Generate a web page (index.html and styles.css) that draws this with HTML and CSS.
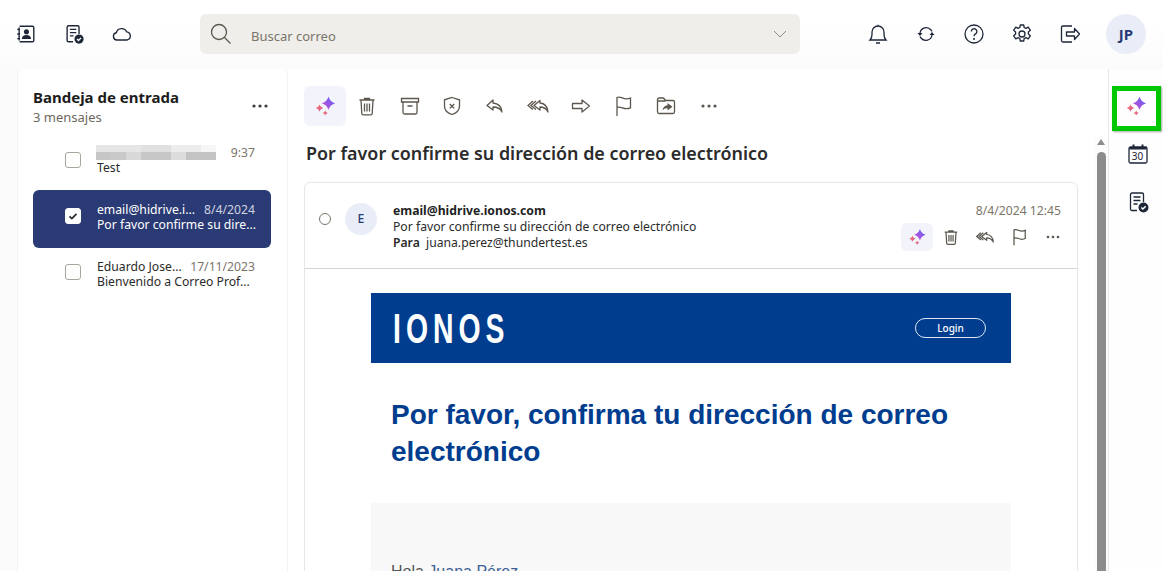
FILE: index.html
```html
<!DOCTYPE html>
<html lang="es">
<head>
<meta charset="utf-8">
<title>Correo</title>
<link rel="stylesheet" href="styles.css">
</head>
<body>
<svg class="defs" width="0" height="0" aria-hidden="true">
  <defs>
    <linearGradient id="spark-big" x1="0" y1="1" x2="1" y2="0"><stop offset="0" stop-color="#d04fd0"/><stop offset="1" stop-color="#5560f8"/></linearGradient>
    <linearGradient id="spark-small" x1="0" y1="0" x2="1" y2="1"><stop offset="0" stop-color="#f08a66"/><stop offset="1" stop-color="#d9479c"/></linearGradient>
    <symbol id="i-spark" viewBox="0 0 24 24">
      <path stroke="none" fill="url(#spark-big)" d="M15.500 2.500C16.600 6 18.300 7.900 22.300 9.300 18.300 10.700 16.600 12.600 15.500 16.100 14.400 12.600 12.700 10.700 8.700 9.300 12.700 7.900 14.400 6 15.500 2.500z"/>
      <path stroke="none" fill="url(#spark-small)" d="M6.500 10.300C7.100 12.300 8 13.200 10.300 14 8 14.800 7.100 15.700 6.500 17.700 5.900 15.700 5 14.800 2.700 14 5 13.200 5.900 12.300 6.500 10.300z"/>
      <path stroke="none" fill="url(#spark-small)" d="M12.200 16.300C12.600 17.800 13.200 18.400 14.900 19 13.200 19.600 12.600 20.200 12.200 21.700 11.800 20.200 11.200 19.600 9.500 19 11.200 18.400 11.800 17.800 12.200 16.300z"/>
    </symbol>
    <symbol id="i-trash" viewBox="0 0 24 24"><path d="M4.500 6h15M9.500 6V4.500h5V6M6 6l.8 13.500a1.500 1.500 0 0 0 1.500 1.400h7.400a1.500 1.500 0 0 0 1.500-1.400L18 6M9.500 9.500v8M12 9.500v8M14.500 9.500v8"/></symbol>
    <symbol id="i-archive" viewBox="0 0 24 24"><path d="M3.500 4.500h17v3.500h-17zM5 8v10.500a1.500 1.500 0 0 0 1.500 1.500h11a1.500 1.500 0 0 0 1.500-1.500V8M9.500 12h5"/></symbol>
    <symbol id="i-shield" viewBox="0 0 24 24"><path d="M12 3.500l7.500 2.300v6.200c0 4.200-3 7-7.500 8.500-4.500-1.500-7.500-4.300-7.500-8.500V5.800zM9.800 10l4.400 4.400M14.200 10l-4.400 4.400"/></symbol>
    <symbol id="i-reply" viewBox="0 0 24 24"><path d="M10 6L4 11.500l6 4.500v-3c4 0 7 1 9 5-.5-5.500-3.500-8.500-9-9z" stroke-linejoin="round"/></symbol>
    <symbol id="i-replyall" viewBox="0 0 24 24"><path d="M14 6.500L8 11.500l6 4.500v-3c4 0 6 1 8 5-.5-5.500-2.500-8.500-8-9z" stroke-linejoin="round"/><path d="M7 7l-5 4.500 5 4M10 7l-5 4.500 5 4"/></symbol>
    <symbol id="i-forward" viewBox="0 0 24 24"><path d="M3.500 9.500h9.500V6l7.500 6-7.500 6v-3.500H3.500z" stroke-linejoin="round"/></symbol>
    <symbol id="i-flag" viewBox="0 0 24 24"><path d="M6 22V3.500c4-1.500 5.500 1.600 9.500 1.400 1.500 0 3-.4 4-.9v9.800c-1 .5-2.500.9-4 .9-4 .2-5.500-2.700-9.500-1.200"/></symbol>
    <symbol id="i-move" viewBox="0 0 24 24"><path d="M3.500 18V5.500A1.500 1.500 0 0 1 5 4h4.500l2 2.500H19A1.500 1.500 0 0 1 20.500 8v10a1.500 1.500 0 0 1-1.500 1.500H5A1.500 1.500 0 0 1 3.500 18zM3.500 7h8"/><path class="solid" d="M13.500 9l5 3.800-5 3.700v-2.200c-2.300 0-3.800.6-5 2.200.3-3 2-5 5-5.300z"/></symbol>
    <symbol id="i-dots" viewBox="0 0 24 24"><circle class="solid" cx="6" cy="12" r="1.600"/><circle class="solid" cx="12" cy="12" r="1.600"/><circle class="solid" cx="18" cy="12" r="1.600"/></symbol>
    <symbol id="i-contacts" viewBox="0 0 24 24"><path d="M5 3.500h14a1.500 1.500 0 0 1 1.500 1.500v14a1.500 1.500 0 0 1-1.500 1.500H5"/><path d="M4.500 5v14M2.500 7h3M2.500 12h3M2.500 17h3"/><circle class="solid" cx="12.500" cy="9.500" r="2.800"/><path class="solid" d="M7.500 17.500c0-3 2-4.500 5-4.500s5 1.500 5 4.500z"/></symbol>
    <symbol id="i-tasks" viewBox="0 0 24 24"><path d="M11 20.500H6A1.500 1.500 0 0 1 4.500 19V4.500A1.500 1.500 0 0 1 6 3h10a1.500 1.500 0 0 1 1.500 1.500V12M7.500 7h7M7.500 10.500h7M7.500 14h4"/><circle class="solid" cx="17.500" cy="17.500" r="5"/><path class="tick" d="M15.300 17.500l1.600 1.600 2.800-2.900"/></symbol>
    <symbol id="i-cloud" viewBox="0 0 24 24"><path d="M6.500 18.500a4 4 0 0 1-.7-7.900 6 6 0 0 1 11.300-.9 4.500 4.500 0 0 1 .7 8.800z"/></symbol>
    <symbol id="i-search" viewBox="0 0 24 24"><circle cx="10" cy="10" r="7.500"/><path d="M15.500 15.500l6 6"/></symbol>
    <symbol id="i-chevron" viewBox="0 0 24 24"><path d="M6 9l6 6 6-6"/></symbol>
    <symbol id="i-bell" viewBox="0 0 24 24"><path d="M4 18c1.500-1.500 2-3 2-5.500V10a6 6 0 0 1 12 0v2.500c0 2.500.5 4 2 5.500zM10 21h4M12 4V2.800"/></symbol>
    <symbol id="i-sync" viewBox="0 0 24 24"><path d="M6 11a6.200 6.200 0 0 1 11-3l1 1.500M18 13a6.200 6.200 0 0 1-11 3l-1-1.500"/><path class="solid" d="M3.500 11h5L6 14zM20.500 13h-5L18 10z"/></symbol>
    <symbol id="i-help" viewBox="0 0 24 24"><circle cx="12" cy="12" r="9"/><path d="M9.300 9.500a2.800 2.800 0 1 1 4.300 2.400c-1 .6-1.600 1.100-1.600 2.300"/><circle class="solid" cx="12" cy="17" r="1"/></symbol>
    <symbol id="i-gear" viewBox="0 0 24 24"><circle cx="12" cy="12" r="3"/><path d="M10.300 3h3.400l.5 2.500 1.700.8 2.300-1.100 2.100 3-1.900 1.700v2.200l1.900 1.700-2.100 3-2.300-1.100-1.700.8-.5 2.500h-3.400l-.5-2.500-1.700-.8-2.300 1.100-2.100-3 1.900-1.700v-2.200L3.700 8.200l2.100-3 2.300 1.100 1.700-.8z" stroke-linejoin="round"/></symbol>
    <symbol id="i-logout" viewBox="0 0 24 24"><path d="M14 4H5a1.500 1.500 0 0 0-1.500 1.500v13A1.500 1.500 0 0 0 5 20h9"/><path d="M8.500 10h8V6.500l5 5.500-5 5.500V14h-8z" stroke-linejoin="round"/></symbol>
    <symbol id="i-calendar" viewBox="0 0 24 24"><path d="M4.500 5h15A1.500 1.500 0 0 1 21 6.500v13a1.500 1.500 0 0 1-1.500 1.500h-15A1.500 1.500 0 0 1 3 19.500v-13A1.500 1.500 0 0 1 4.500 5z"/><path class="solid" d="M3.500 5h17v2.500h-17zM6.500 2.500h2V5h-2zM15.500 2.500h2V5h-2z"/></symbol>
  </defs>
</svg>

<header class="topbar">
  <nav class="top-group top-left">
    <svg class="icon dark"><use href="#i-contacts"/></svg>
    <svg class="icon dark"><use href="#i-tasks"/></svg>
    <svg class="icon dark"><use href="#i-cloud"/></svg>
  </nav>
  <div class="search">
    <svg class="icon search-icon"><use href="#i-search"/></svg>
    <span class="search-text">Buscar correo</span>
    <svg class="chevron"><use href="#i-chevron"/></svg>
  </div>
  <nav class="top-group top-right">
    <svg class="icon dark"><use href="#i-bell"/></svg>
    <svg class="icon dark"><use href="#i-sync"/></svg>
    <svg class="icon dark"><use href="#i-help"/></svg>
    <svg class="icon dark"><use href="#i-gear"/></svg>
    <svg class="icon dark"><use href="#i-logout"/></svg>
  </nav>
  <div class="avatar-top">JP</div>
</header>

<div class="workspace">
  <aside class="folder">
    <div class="folder-head">
      <div>
        <h2 class="folder-title">Bandeja de entrada</h2>
        <p class="folder-count">3 mensajes</p>
      </div>
      <svg class="icon dots-head"><use href="#i-dots"/></svg>
    </div>
    <ul class="messages">
      <li class="message first">
        <span class="check"></span>
        <div class="message-body">
          <div class="line"><span class="pixelated"></span><span class="when">9:37</span></div>
          <div class="line"><span class="subject">Test</span></div>
        </div>
      </li>
      <li class="message selected">
        <span class="check on"><svg viewBox="0 0 16 16"><path d="M4 8.500l2.700 2.500L12 5.500"/></svg></span>
        <div class="message-body">
          <div class="line"><span class="sender">email@hidrive.i...</span><span class="when">8/4/2024</span></div>
          <div class="line"><span class="subject">Por favor confirme su dire...</span></div>
        </div>
      </li>
      <li class="message last">
        <span class="check"></span>
        <div class="message-body">
          <div class="line"><span class="sender">Eduardo Jose...</span><span class="when">17/11/2023</span></div>
          <div class="line"><span class="subject">Bienvenido a Correo Prof...</span></div>
        </div>
      </li>
    </ul>
  </aside>

  <main class="reader">
    <div class="reader-col">
      <div class="toolbar">
        <span class="spark-btn"><svg class="icon"><use href="#i-spark"/></svg></span>
        <svg class="icon tool"><use href="#i-trash"/></svg>
        <svg class="icon tool"><use href="#i-archive"/></svg>
        <svg class="icon tool"><use href="#i-shield"/></svg>
        <svg class="icon tool"><use href="#i-reply"/></svg>
        <svg class="icon tool"><use href="#i-replyall"/></svg>
        <svg class="icon tool"><use href="#i-forward"/></svg>
        <svg class="icon tool"><use href="#i-flag"/></svg>
        <svg class="icon tool"><use href="#i-move"/></svg>
        <svg class="icon tool"><use href="#i-dots"/></svg>
      </div>
      <h1 class="mail-title">Por favor confirme su dirección de correo electrónico</h1>
      <article class="card">
        <div class="card-head">
          <span class="radio"></span>
          <span class="avatar">E</span>
          <div class="card-meta">
            <div class="from">email@hidrive.ionos.com</div>
            <div>Por favor confirme su dirección de correo electrónico</div>
            <div><b class="to-label">Para</b> juana.perez@thundertest.es</div>
          </div>
          <div class="card-side">
            <div class="card-date">8/4/2024 12:45</div>
            <div class="card-actions">
              <span class="spark-mini"><svg class="icon"><use href="#i-spark"/></svg></span>
              <svg class="icon mini"><use href="#i-trash"/></svg>
              <svg class="icon mini"><use href="#i-replyall"/></svg>
              <svg class="icon mini"><use href="#i-flag"/></svg>
              <svg class="icon mini"><use href="#i-dots"/></svg>
            </div>
          </div>
        </div>
        <div class="mail">
          <div class="mail-banner">
            <span class="brand">IONOS</span>
            <span class="login">Login</span>
          </div>
          <h2 class="mail-heading">Por favor, confirma tu dirección de correo electrónico</h2>
          <div class="mail-box">
            <p class="greeting">Hola <span class="name">Juana Pérez</span></p>
          </div>
        </div>
      </article>
    </div>
    <div class="scrollbar">
      <span class="scroll-up"></span>
      <span class="scroll-thumb"></span>
    </div>
  </main>

  <aside class="rail">
    <span class="rail-active"><svg class="icon"><use href="#i-spark"/></svg></span>
    <span class="rail-item">
      <svg class="icon dark"><use href="#i-calendar"/></svg>
      <span class="cal-num">30</span>
    </span>
    <span class="rail-item"><svg class="icon dark"><use href="#i-tasks"/></svg></span>
  </aside>
</div>
</body>
</html>
```
FILE: styles.css
```css
* { box-sizing: border-box; }
html, body { margin: 0; height: 571px; overflow: hidden; }
body {
  font-family: "Noto Sans", "Open Sans", sans-serif;
  font-size: 12.2px;
  color: #2b2b2b;
  background: #fbfbfb;
  display: flex;
  flex-direction: column;
}
.defs { position: absolute; }
h1, h2, p, ul { margin: 0; padding: 0; }
ul { list-style: none; }

.icon { width: 24px; height: 24px; flex: none; fill: none; stroke: #5c574e; stroke-width: 1.3; }
.icon.dark { stroke: #1e2738; color: #1e2738; }
.solid { fill: currentColor; stroke: none; }
.icon.tool, .icon.mini { color: #5c574e; }
.tick { stroke: #fff; stroke-width: 1.4; fill: none; }

.topbar {
  height: 69px;
  flex: none;
  display: flex;
  align-items: center;
  padding: 0 17px 1px 15px;
  background: linear-gradient(#ffffff 30%, #fbfbfb);
}
.top-group { display: flex; gap: 24px; color: #1e2738; }
.top-left { gap: 26px; }
.top-left .icon { width: 22px; height: 22px; stroke-width: 1.5; }
.search {
  width: 600px;
  height: 40px;
  margin-left: 67px;
  padding: 0 8px 0 9px;
  display: flex;
  align-items: center;
  background: #efeeea;
  border-radius: 6px;
}
.search-icon { stroke: #5c574e; }
.search-text { margin-left: 18px; margin-top: 4px; flex: 1; font-size: 13px; color: #7b756a; }
.chevron { width: 24px; height: 24px; fill: none; stroke: #8e897f; stroke-width: 1; }
.top-right { margin-left: 66px; }
.avatar-top {
  width: 40px;
  height: 40px;
  margin-left: 24px;
  border-radius: 50%;
  background: #e9edf7;
  color: #2a3a74;
  font-weight: 700;
  font-size: 15px;
  display: flex;
  align-items: center;
  justify-content: center;
}

.workspace { flex: 1; display: flex; min-height: 0; padding-left: 17px; }

.folder {
  width: 271px;
  flex: none;
  background: #fff;
  border: 1px solid #f3f3f3;
  border-width: 0 1px;
  border-radius: 6px 6px 0 0;
  padding: 0 15px;
}
.folder-head { display: flex; justify-content: space-between; padding-top: 18px; height: 65px; }
.folder-title { font-size: 15px; line-height: 21px; font-weight: 700; color: #1c1c1c; }
.folder-count { font-size: 13px; line-height: 18px; margin-top: 0; color: #6e685e; }
.dots-head { margin: 7px 0 0 0; color: #3b3b3b; }

.messages { display: flex; flex-direction: column; }
.message {
  display: flex;
  align-items: flex-start;
  height: 56px;
  padding: 13px 16px 0 32px;
  border-radius: 6px;
  line-height: 15px;
  width: 238px;
}
.message.first { padding-top: 11px; }
.message.selected { height: 58px; margin-bottom: -2px; padding-top: 12px; background: #2a3a74; color: #fff; }
.check {
  width: 16px;
  height: 16px;
  margin-top: 7px;
  flex: none;
  border: 1px solid #a9a59c;
  border-radius: 3px;
  background: #fff;
  margin-right: 16px;
  display: flex;
}
.first .check { margin-top: 7px; }
.selected .check { margin-top: 6px; }
.last .check { margin-top: 5px; }
.check.on { border-color: #fff; }
.check svg { width: 14px; height: 14px; fill: none; stroke: #2b2b2b; stroke-width: 2; }
.message-body { flex: 1; min-width: 0; }
.line { display: flex; justify-content: space-between; white-space: nowrap; }
.when { color: #7b756a; }
.selected .when { color: #cfd3e2; }
.pixelated {
  width: 120px;
  height: 15px;
  margin-left: -1px;
  background:
    linear-gradient(90deg, #c6c6c6 0 15px, #c9c9c9 15px 30px, #d8d8d8 30px 45px, #c7c7c7 45px 75px, #dcdcdc 75px 90px, #c3c3c3 90px 120px) bottom / 120px 8px no-repeat,
    linear-gradient(90deg, #e6e6e6 0 45px, #e0e0e0 45px 75px, #ececec 75px 105px, #f6f6f6 105px 120px) top / 120px 7px no-repeat;
}

.reader {
  width: 821px;
  flex: none;
  display: flex;
  background: #fff;
  border-right: 1px solid #e8e8e8;
}
.reader-col { width: 790px; flex: none; padding: 17px 0 0 16px; }
.toolbar { display: flex; align-items: center; gap: 18.75px; height: 40px; }
.spark-btn {
  width: 42px;
  height: 40px;
  display: flex;
  align-items: center;
  justify-content: center;
  background: #f3f4fb;
  border-radius: 6px;
  margin-right: -10px;
}
.mail-title { font-size: 17.9px; line-height: 25px; font-weight: 600; margin: 15px 0 16px 2px; color: #2b2b2b; }

.card {
  width: 774px;
  height: 400px;
  border: 1px solid #e6e6e6;
  border-radius: 6px 6px 0 0;
  overflow: hidden;
}
.card-head {
  height: 86px;
  display: flex;
  border-bottom: 1px solid #d5d3cc;
  padding: 20px 16px 0 14px;
  line-height: 16px;
}
.radio { width: 12px; height: 12px; border: 1px solid #7b756a; border-radius: 50%; margin-top: 10px; flex: none; }
.avatar {
  width: 32px;
  height: 32px;
  flex: none;
  margin-left: 14px;
  border-radius: 50%;
  background: #e9edf7;
  color: #2a3a74;
  font-weight: 500;
  display: flex;
  align-items: center;
  justify-content: center;
}
.card-meta { margin-left: 16px; flex: 1; }
.from { font-weight: 700; color: #1f1f1f; }
.to-label { font-weight: 600; margin-right: 3px; }
.card-side { display: flex; flex-direction: column; align-items: flex-end; }
.card-date { color: #7b756a; }
.card-actions { display: flex; align-items: center; margin: 4px -2px 0 0; gap: 14px; }
.spark-mini {
  width: 32px;
  height: 28px;
  margin-right: -6px;
  display: flex;
  align-items: center;
  justify-content: center;
  background: #f3f4fb;
  border-radius: 6px;
}
.spark-mini .icon { width: 20px; height: 20px; }
.icon.mini { width: 20px; height: 20px; stroke-width: 1.5; }

.mail { padding: 24px 0 0 66px; }
.mail-banner {
  width: 640px;
  height: 70px;
  background: #003d8f;
  display: flex;
  align-items: center;
  justify-content: space-between;
  padding: 0 25px 0 22px;
  color: #fff;
}
.brand {
  font-family: "Liberation Sans", sans-serif;
  font-weight: 700;
  font-size: 43px;
  letter-spacing: 7.600px;
  line-height: 1;
  display: inline-block;
  transform: scaleX(.66);
  transform-origin: left center;
}
.login {
  width: 71px;
  height: 20px;
  border: 1.500px solid #dfe6f2;
  border-radius: 10px;
  display: flex;
  align-items: center;
  justify-content: center;
  font-size: 10px;
  font-weight: 500;
}
.mail-heading {
  font-family: "Liberation Sans", Arial, sans-serif;
  font-size: 28px;
  line-height: 37px;
  font-weight: 700;
  color: #003d8f;
  padding: 33px 40px 0 20px;
  width: 640px;
  height: 140px;
}
.mail-box { width: 640px; height: 120px; background: #f8f8f8; padding: 60px 20px 0; }
.greeting { font-family: "Liberation Sans", Arial, sans-serif; font-size: 16px; line-height: 18px; color: #555; }
.name { color: #3c5f95; }

.scrollbar {
  width: 14px;
  margin: 68px 0 0 16px;
  background: #fcfcfc;
  display: flex;
  flex-direction: column;
  align-items: center;
}
.scroll-up {
  margin-top: 2px;
  width: 0;
  height: 0;
  border-left: 4.500px solid transparent;
  border-right: 4.500px solid transparent;
  border-bottom: 6px solid #8c8c8c;
}
.scroll-thumb { width: 9px; flex: 1; margin-top: 7px; background: #8c8c8c; border-radius: 5px 5px 0 0; }

.rail { flex: 1; display: flex; flex-direction: column; align-items: center; padding-top: 17px; background: #fefefe; }
.rail-active {
  width: 49px;
  height: 45px;
  padding-bottom: 5px;
  border: 5px solid #00c800;
  display: flex;
  align-items: center;
  justify-content: center;
  box-shadow: 1px 1px 2px rgba(0, 0, 0, .35);
}
.rail-item { position: relative; display: flex; height: 24px; margin: 24px 0 0 3px; }
.rail-active + .rail-item { margin-top: 11px; }
.cal-num {
  position: absolute;
  left: 0;
  right: 0;
  top: 7px;
  text-align: center;
  font-size: 10px;
  line-height: 14px;
  color: #1e2738;
}
```
